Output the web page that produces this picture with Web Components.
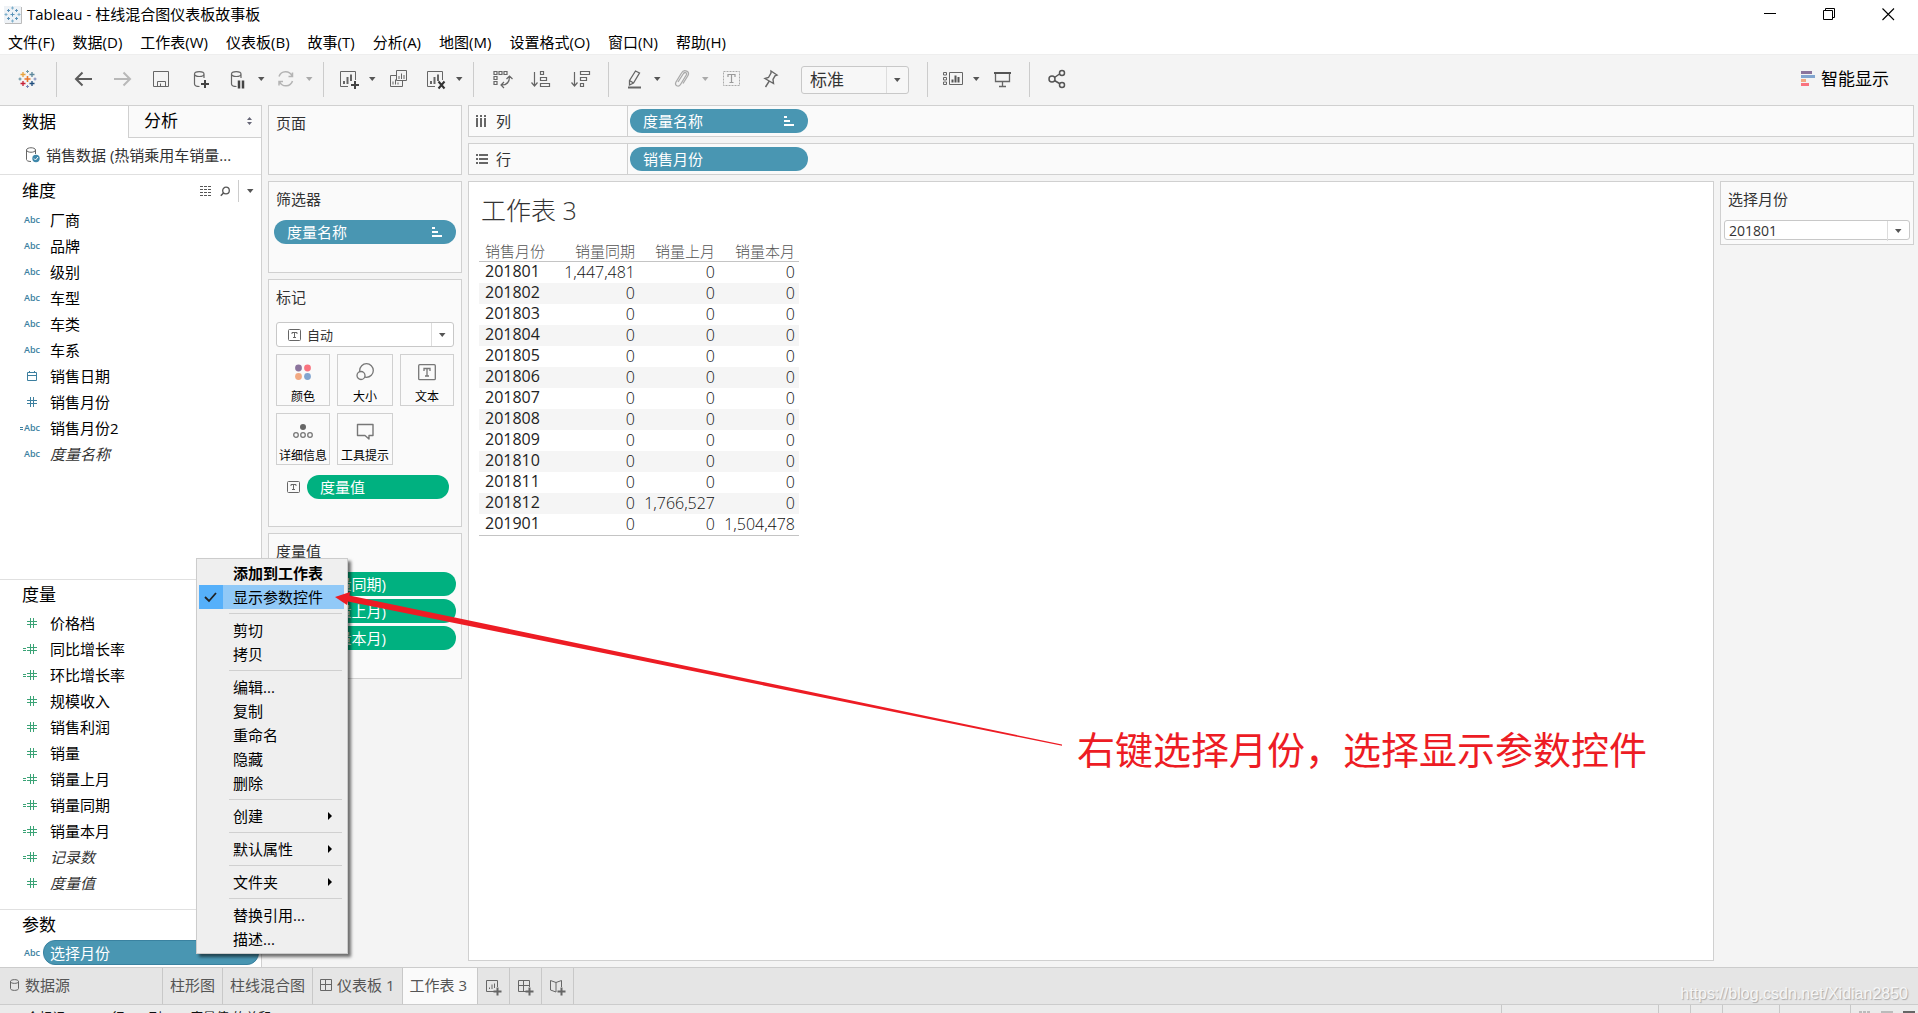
<!DOCTYPE html>
<html lang="zh-CN">
<head>
<meta charset="utf-8">
<title>Tableau - 柱线混合图仪表板故事板</title>
<style>
html,body{margin:0;height:100%}
body{font:15px/20px "Open Sans","Noto Sans CJK SC",sans-serif;color:#000;background:#f4f4f4;overflow:hidden}
</style>
</head>
<body>
<tb-app></tb-app>
<script>
const S = 'fill="none" stroke="#666"';
const caret = '<path d="M0 0h8l-4 4.5z" fill="#555"/>';
const caretLight = '<path d="M0 0h8l-4 4.5z" fill="#aaa"/>';
const plus = (x, y, c = '#444') => `<path d="M${x - 4} ${y}h8M${x} ${y - 4}v8" stroke="${c}" stroke-width="2" fill="none"/>`;
const cyl = `<path d="M16 11V7M6.500 7v10c0 1.500 2 2.500 5 2.500M6.500 7c0-3.300 9.500-3.300 9.500 0s-9.500 3.300-9.500 0" ${S} stroke-width="1.200"/>`;
const cross = (x, y, r, c, w = 1) => `<path d="M${x - r} ${y}h${2 * r}M${x} ${y - r}v${2 * r}" stroke="${c}" stroke-width="${w}"/>`;
const ICONS = {
  app: [19, 19, `<rect x="1" y="1" width="17" height="17" fill="#eef2f6"/><path d="M18.500 2v16.500H2" fill="none" stroke="#bbb"/>` +
    cross(9.5, 9.5, 2, '#5b93b8') + cross(5.5, 5.5, 1.500, '#5b93b8') + cross(13.5, 5.5, 1.500, '#5b93b8') + cross(5.5, 13.5, 1.500, '#5b93b8') + cross(13.5, 13.5, 1.500, '#5b93b8') +
    cross(9.5, 3, 1.500, '#7fb0cc') + cross(9.5, 16, 1.500, '#7fb0cc') + cross(3, 9.5, 1.500, '#7fb0cc') + cross(16, 9.5, 1.500, '#7fb0cc')],
  logo: [25, 24, cross(12.5, 12, 3, '#e8762c', 1.600) + cross(8, 7.5, 2.500, '#e8a33d', 1.300) + cross(17, 7.5, 2.500, '#5b879b', 1.300) + cross(8, 16.500, 2.500, '#c72037', 1.300) +
    cross(17, 16.500, 2.500, '#1f4d7d', 1.300) + cross(12.5, 4.5, 1.500, '#7199a6') + cross(12.5, 19.500, 1.500, '#7a86b8') + cross(5, 12, 1.500, '#59879b') + cross(20, 12, 1.500, '#7a86b8')],
  back: [25, 24, '<path d="M5 12h16M11.500 5.500L5 12l6.500 6.500" fill="none" stroke="#5c5c5c" stroke-width="2"/>'],
  fwd: [25, 24, '<path d="M4 12h16M13.500 5.500L20 12l-6.500 6.500" fill="none" stroke="#b8b8b8" stroke-width="2"/>'],
  save: [25, 24, `<path d="M4.500 4.500h15v15h-15zM8.500 19v-4.500h8V19M11.500 16.500v3" ${S}/>`],
  dbadd: [25, 24, cyl + plus(17, 17)],
  dbpause: [25, 24, cyl + '<path d="M14 13.500v8M18 13.500v8" stroke="#444" stroke-width="2.500"/>'],
  refresh: [25, 24, '<path d="M6 9.500a7 7 0 0 1 13-.5M19.500 14a7 7 0 0 1-13 .8M19.500 5.500V9.500H15.500M6 18.500v-4h4" fill="none" stroke="#b4b4b4" stroke-width="1.500"/>'],
  sheetadd: [25, 24, `<path d="M12 19.500H4.500v-15h15V13" ${S}/><path d="M8 17v-3M11.500 17V10M15 14V7.500" stroke="#666" stroke-width="2"/>` + plus(19, 18)],
  dup: [25, 24, `<path d="M10.500 3.500h10v10h-10zM10.500 8.500h-6v11h12v-6" ${S}/><path d="M13 12V9M15.500 12V6.500M18 12V8M7 17.500v-3M9.500 17.500v-5M12 17.500v-2" stroke="#666"/>`],
  clear: [25, 24, `<path d="M12 19.500H4.500v-15h15V13" ${S}/><path d="M8 17v-3M11.500 17V10M15 14V7.500" stroke="#666" stroke-width="2"/><path d="M15.500 14.500l6 7M21.500 14.500l-6 7" stroke="#333" stroke-width="2"/>`],
  swap: [25, 24, `<path d="M5 4.500h3v3h-3zM10 4.500h3v3h-3zM15 4.500h3v3h-3zM5 9.500h3v3h-3zM5 14.500h3v3h-3zM20.500 9.500c0 6-2.500 8.500-8 8.500M17.500 12l3-3 3 3M15 15l-3 3 3 3" ${S} stroke-width="1.200"/>`],
  asc: [25, 24, `<path d="M5.500 5v13M2.500 15.500l3 3.500 3-3.500M11.500 4.500h3v3h-3zM11.500 10.500h6v3h-6zM11.500 16.500h9v3h-9z" ${S} stroke-width="1.200"/>`],
  desc: [25, 24, `<path d="M5.500 5v13M2.500 15.500l3 3.500 3-3.500M11.500 4.500h9v3h-9zM11.500 10.500h6v3h-6zM11.500 16.500h3v3h-3z" ${S} stroke-width="1.200"/>`],
  pen: [25, 24, `<path d="M8.500 13.500L14.500 4l4 2-6 10-4 2zM8.500 13.500l4 2.500" ${S} stroke-width="1.300"/><path d="M7 20.500h13" stroke="#666" stroke-width="2"/>`],
  clip: [25, 24, '<path d="M9 15l5.500-8.500c1.500-2 4-.5 2.800 1.500L11.500 17.500c-2 3.200-6.500 1-4.500-2.500L12.500 6c2.500-4.500 9-1.500 6.500 2.500L14 16.500" fill="none" stroke="#aaa" stroke-width="1.300"/>'],
  label: [25, 24, '<rect x="4.500" y="4.500" width="16" height="14" fill="none" stroke="#aaa" stroke-dasharray="2 1"/><path d="M9 10V7.500h7V10M12.500 7.500v8M10.500 15.500h4" fill="none" stroke="#999" stroke-width="1.200"/>'],
  pin: [25, 24, `<path d="M13 4l6 4-2 .8-2 3.700.5 4-8.500-5 3.500-1 2.500-4.500zM11 14.500L7.500 20" ${S} stroke-width="1.400"/>`],
  showcards: [25, 24, `<path d="M9.500 5.500h13v12h-13zM3.500 5.500h3v2.500h-3zM3.500 10.500h3v2.500h-3zM3.500 15h3v2.500h-3z" ${S}/><path d="M12.500 15.500v-3M15.500 15.500V8.500M18.500 15.500V10" stroke="#555" stroke-width="2"/>`],
  present: [25, 24, `<path d="M4 6h17" stroke="#555" stroke-width="2"/><path d="M5.500 7v7.500h14V7M12.500 14.500v5M9 19.500h7" ${S} stroke-width="1.300"/>`],
  share: [25, 24, '<path d="M10.500 10.500l5-3.500M10.500 13.500l5 3" stroke="#555" stroke-width="1.500"/><g fill="none" stroke="#555" stroke-width="1.500"><circle cx="8" cy="12" r="3"/><circle cx="18" cy="6" r="2.500"/><circle cx="18" cy="18" r="2.500"/></g>'],
  caret: [8, 5, caret], caretLight: [8, 5, caretLight],
  caretS: [7, 4, '<path d="M0 0h6.500L3.250 4z" fill="#555"/>'], caretSL: [7, 4, '<path d="M0 0h6.500L3.250 4z" fill="#aaa"/>'],
  showme: [14, 16, '<path d="M0 0h11v3H0z" fill="#8b749c"/><path d="M0 4h14v3H0z" fill="#82a5cf"/><path d="M0 8h5v3H0z" fill="#f2a982"/><path d="M0 12h8v3H0z" fill="#f9737f"/>'],
  updown: [6, 8, '<path d="M0 3l2.500-3L5 3zM0 5l2.500 3L5 5z" fill="#667"/>'],
  min: [13, 13, '<path d="M0 5.500h12" stroke="#000"/>'],
  restore: [13, 13, '<path d="M.5 2.500h9v9h-9zM2.500 2.500v-2h9v9h-2" fill="none" stroke="#000"/>'],
  close: [13, 13, '<path d="M.5.5l11.500 11.500M12 .5L.5 12" stroke="#000" stroke-width="1.100"/>'],
  dbok: [14, 16, '<path d="M9.500 7V3M.500 3v9.500c0 1 1.500 2 4.500 2M.500 3C.5 0 9.500 0 9.500 3s-9 3-9 0" fill="none" stroke="#666"/><circle cx="10" cy="11.500" r="3.700" fill="#3f88ab"/><path d="M8 11.500l1.500 1.500 2.500-3" fill="none" stroke="#fff"/>'],
  db: [10, 12, '<path d="M.5 2.500v7c0 2.500 8 2.500 8 0v-7M.5 2.500c0-2.500 8-2.500 8 0s-8 2.500-8 0" fill="none" stroke="#666"/>'],
  list: [12, 10, '<path d="M0 .5h12M0 3.500h12M0 6.500h12M0 9.500h12" stroke="#555" stroke-dasharray="3 1"/>'],
  find: [10, 11, '<circle cx="6" cy="4.500" r="3.300" fill="none" stroke="#555" stroke-width="1.300"/><path d="M3.500 7L.8 9.800" stroke="#555" stroke-width="1.500"/>'],
  hash: [10, 10, '<path d="M3.500 0v10M6.500 0v10M0 3.500h10M0 6.500h10" stroke="currentColor"/>'],
  cal: [10, 10, '<path d="M.5 1.500h9v8h-9zM.5 4.500h9M2.500 0v2M7.500 0v2" fill="none" stroke="currentColor"/>'],
  eq: [3, 5, '<path d="M0 1.500h3M0 3.500h3" stroke="currentColor"/>'],
  cols: [10, 12, '<path d="M1 0v12M5 0v12M9 0v12" stroke="#666" stroke-width="2" stroke-dasharray="2 1 9"/>'],
  rows: [12, 10, '<path d="M0 1h12M0 5h12M0 9h12" stroke="#666" stroke-width="2" stroke-dasharray="2 1 9"/>'],
  sort: [10, 10, '<path d="M0 1h3M0 5h6M0 9h10" stroke="#fff" stroke-width="2"/>'],
  T: [13, 12, '<rect x=".5" y=".5" width="12" height="11" rx="1" fill="none" stroke="#666"/><path d="M4 5V3.500h5V5M6.500 3.500v5M5 8.500h3" fill="none" stroke="#666"/>'],
  Tbig: [18, 17, '<rect x=".7" y=".7" width="16.600" height="15" rx="1" fill="none" stroke="#777" stroke-width="1.300"/><path d="M6 7V4.500h6V7M9 4.500v7.500M7 12h4" fill="none" stroke="#777" stroke-width="1.300"/>'],
  color: [16, 17, '<circle cx="3.500" cy="4" r="3.400" fill="#8b749c"/><circle cx="12.500" cy="4" r="3.400" fill="#f9737f"/><circle cx="3.500" cy="12.500" r="3.400" fill="#f2a982"/><circle cx="12.500" cy="12.500" r="3.400" fill="#82a5cf"/>'],
  size: [18, 18, '<circle cx="10.500" cy="7.500" r="6.800" fill="none" stroke="#777" stroke-width="1.300"/><circle cx="5" cy="12.500" r="4" fill="#fafafa" stroke="#777" stroke-width="1.300"/>'],
  detail: [20, 16, '<circle cx="10" cy="4" r="3" fill="#666"/><g fill="none" stroke="#777" stroke-width="1.300"><circle cx="3" cy="12" r="2.300"/><circle cx="10" cy="12" r="2.300"/><circle cx="17" cy="12" r="2.300"/></g>'],
  tip: [18, 17, '<path d="M1.500 1.500h15.500v11h-4v3.500l-4-3.500H1.500z" fill="none" stroke="#777" stroke-width="1.400" stroke-linejoin="round"/>'],
  check: [14, 11, '<path d="M1 5l4 4 7-8" fill="none" stroke="#222" stroke-width="1.800"/>'],
  right: [5, 8, '<path d="M0 0l4 4-4 4z" fill="#000"/>'],
  dash: [12, 12, '<path d="M.5.5h11v11H.5zM5.500.5v11M.5 5.500h11" fill="none" stroke="#666"/>'],
  nsheet: [16, 16, '<path d="M8 11.500H.5V.5h11V7" fill="none" stroke="#666"/><path d="M3.500 9V7.500M6 9V4.500M8.500 8V3.500" stroke="#666"/>' + plus(11.500, 11.500, '#666')],
  ndash: [16, 16, '<path d="M8 11.500H.5V.5h11V7M5.500.5v11M.5 5.500h11" fill="none" stroke="#666"/>' + plus(11.500, 11.500, '#666')],
  nstory: [16, 16, '<path d="M.5.500L6 2.500 11.500.500V7M.5.500V10L6 12M6 2.500V12" fill="none" stroke="#666"/>' + plus(11.500, 11.500, '#666')],
  v1: [12, 12, '<path d="M0 1h12M0 5h12" stroke="#bbb" stroke-width="2" stroke-dasharray="3 1"/>'],
  v2: [12, 12, '<path d="M0 2h12" stroke="#bbb" stroke-width="4"/>'],
  v3: [12, 12, '<path d="M0 2h12" stroke="#666" stroke-width="4"/>']
};
const icon = n => `<tb-icon name="${n}"></tb-icon>`;

// Registers an element whose shadow root is filled from a style sheet and a render function.
function define(name, css, render) {
  customElements.define(name, class extends HTMLElement {
    constructor() {
      super();
      this.attachShadow({ mode: 'open' });
    }
    connectedCallback() {
      this.shadowRoot.innerHTML = `<style>*{box-sizing:border-box}button{font:inherit;color:inherit;border:0;background:none;padding:0;margin:0}${css}</style>${render(this)}`;
    }
  });
}

define('tb-icon', ':host{display:block;flex:none;line-height:0}svg{display:block}', e => {
  const [w, h, body] = ICONS[e.getAttribute('name')];
  return `<svg width="${w}" height="${h}" viewBox="0 0 ${w} ${h}" aria-hidden="true">${body}</svg>`;
});

define('tb-titlebar', `
:host{display:flex;height:28px;background:#fff;align-items:center;padding-left:3px}
.t{margin-left:5px;flex:1}
button{width:59px;height:28px;display:grid;place-items:center}`,
() => `${icon('app')}<span class="t">Tableau - 柱线混合图仪表板故事板</span>
<button aria-label="最小化">${icon('min')}</button><button aria-label="还原">${icon('restore')}</button><button aria-label="关闭">${icon('close')}</button>`);

define('tb-menubar', `
:host{display:flex;height:26px;background:#fff;gap:18px;padding:2px 8px 0;align-items:center;box-sizing:border-box}
button{white-space:nowrap}`,
() => ['文件(F)', '数据(D)', '工作表(W)', '仪表板(B)', '故事(T)', '分析(A)', '地图(M)', '设置格式(O)', '窗口(N)', '帮助(H)'].map(t => `<button>${t}</button>`).join(''));

define('tb-select', `
:host{display:grid;border:1px solid #c8c8c8;border-radius:3px;background:#fff;color:#333;height:var(--h,28px)}
select,.c{grid-area:1/1}
select{appearance:none;border:0;background:none;font:inherit;color:inherit;padding:0 30px 0 var(--pad,8px);margin:0;width:100%;height:100%;outline:0}
.c{justify-self:end;width:22px;border-left:1px solid #ddd;display:grid;place-items:center;pointer-events:none}
slot{display:contents}
::slotted(*){grid-area:1/1;align-self:center;margin-left:11px;pointer-events:none}`,
e => `<select aria-label="${e.getAttribute('label')}"><option>${e.getAttribute('value')}</option></select><span class="c">${icon('caretS')}</span><slot></slot>`);

define('tb-toolbar', `
:host{display:flex;height:51px;padding-bottom:2px;align-items:center;border-top:1px solid #eee;box-sizing:border-box}
button{width:39px;height:32px;display:grid;place-items:center;flex:none}
.s{width:35px}.k{width:13px}.logo{width:55px}.w{width:40px}
hr{width:1px;height:35px;border:0;background:#ccc;margin:0 7px}
hr:first-of-type{margin-left:1px}
tb-select{width:108px;margin:2px 11px 0;font-size:17px;background:#f7f7f7}
.me{width:auto;margin-left:auto;margin-right:29px;display:flex;align-items:center;gap:6px;font-size:17px}`,
() => {
  const b = (n, l, c = '') => `<button class="${c}" aria-label="${l}">${icon(n)}</button>`;
  const sp = (n, l, light) => b(n, l, 's') + b(light ? 'caretSL' : 'caretS', l + '选项', 'k');
  return b('logo', '开始页面', 'logo') + '<hr>' + b('back', '撤消') + b('fwd', '重做') + b('save', '保存') + b('dbadd', '新建数据源') +
    sp('dbpause', '暂停自动更新') + sp('refresh', '运行更新', 1) + '<hr>' + sp('sheetadd', '新建工作表') + b('dup', '复制') + sp('clear', '清除') + '<hr>' +
    b('swap', '交换行和列', 'w') + b('asc', '升序', 'w') + b('desc', '降序', 'w') + '<hr>' + sp('pen', '突出显示') + sp('clip', '分组', 1) + b('label', '标签') + b('pin', '固定') +
    '<tb-select label="适合" value="标准"></tb-select><hr>' + sp('showcards', '显示卡') + b('present', '演示') + '<hr>' + b('share', '共享') +
    `<button class="me">${icon('showme')}智能显示</button>`;
});

define('tb-field', `
:host{display:grid;grid-template-columns:40px 1fr;column-gap:10px;height:26px;align-items:center;color:#000}
:host([tone=dim]) .i{color:#3c7f9f}
:host([tone=mea]) .i{color:#3ba376}
:host([calc]) .x{display:block}
.x{display:none}
.i{display:flex;justify-content:end;align-items:center;gap:1px;font:600 9px/14px "Open Sans",sans-serif}
.g{margin-right:3px}
:host([auto]){font-style:italic;color:#333}
:host([auto]) .i{font-style:normal}`,
e => {
  const k = e.getAttribute('kind');
  return `<span class="i"><tb-icon class="x" name="eq"></tb-icon>${k === 'abc' ? 'Abc' : `<tb-icon class="g" name="${k}"></tb-icon>`}</span><slot></slot>`;
});

define('tb-pill', `
:host{display:flex;height:24px;border-radius:12px;background:#4996b2;color:#fff;align-items:center;justify-content:space-between;padding:0 14px 0 13px;white-space:nowrap}
:host([green]){background:#00b180}
button{line-height:24px}`,
e => `<button><slot></slot></button>${e.hasAttribute('sorted') ? icon('sort') : ''}`);

define('tb-datapane', `
:host{display:flex;flex-direction:column;background:#fff;border-right:1px solid #d0d0d0}
.tabs{display:grid;grid-template-columns:128px 1fr;height:33px;border-top:1px solid #d0d0d0;font-size:17px}
.tabs button{text-align:left;padding-left:22px}
.tabs .b{background:#fafafa;border-left:1px solid #d0d0d0;border-bottom:1px solid #d0d0d0;padding:0 8px 2px 15px;display:flex;justify-content:space-between;align-items:center}
.src{display:flex;height:37px;align-items:center;gap:6px;padding:0 0 2px 26px;border-bottom:1px solid #e0e0e0;color:#333}
section{min-height:0;overflow:hidden}
.d{flex:405 1 0}.m{flex:329 1 0;border-top:1px solid #e0e0e0}.p{flex:none;border-top:1px solid #e0e0e0;height:58px}
h2{margin:0;font-size:17px;font-weight:400;line-height:30px;height:30px;padding-left:22px;display:flex;align-items:center}
.d h2{height:32px}
.tools{margin-left:auto;display:flex;align-items:center;gap:8px;margin-right:7px}
.tools i{width:1px;height:22px;background:#ccc}
.par{display:grid;grid-template-columns:40px 1fr;column-gap:3px;align-items:center;padding-right:2px}
.par span{font:600 9px/14px "Open Sans",sans-serif;color:#3c7f9f;text-align:right}
tb-pill{height:25px;padding-left:6px;border:1px solid #3a82a0}`,
() => {
  const f = (tone, k, t, x = '') => `<tb-field role="listitem" tone="${tone}" kind="${k}" ${x}>${t}</tb-field>`;
  const dims = ['厂商', '品牌', '级别', '车型', '车类', '车系'].map(t => f('dim', 'abc', t)).join('') + f('dim', 'cal', '销售日期') + f('dim', 'hash', '销售月份') + f('dim', 'abc', '销售月份2', 'calc') + f('dim', 'abc', '度量名称', 'auto');
  const mea = [['价格档'], ['同比增长率', 'calc'], ['环比增长率', 'calc'], ['规模收入'], ['销售利润'], ['销量'], ['销量上月', 'calc'], ['销量同期', 'calc'], ['销量本月', 'calc'], ['记录数', 'calc auto'], ['度量值', 'auto']].map(([t, x]) => f('mea', 'hash', t, x)).join('');
  return `<div class="tabs"><button>数据</button><button class="b">分析${icon('updown')}</button></div>
<div class="src">${icon('dbok')}<span>销售数据 (热销乘用车销量...</span></div>
<section class="d"><h2>维度<span class="tools">${icon('list')}${icon('find')}<i></i>${icon('caretS')}</span></h2><div role="list">${dims}</div></section>
<section class="m"><h2>度量</h2><div role="list">${mea}</div></section>
<section class="p"><h2>参数</h2><div class="par"><span>Abc</span><tb-pill>选择月份</tb-pill></div></section>`;
});

define('tb-card', `
:host{display:block;border:1px solid #d0d0d0;background:#fafafa;padding:7px 5px 0;color:#333}
h3{margin:0 2px 11px;font-size:15px;line-height:20px;font-weight:400}`,
e => `<h3>${e.getAttribute('heading')}</h3><slot></slot>`);

define('tb-marks', `
:host{display:block;padding:4px 2px 0}
tb-select{--h:25px;--pad:30px;font-size:13px}
.g{display:grid;grid-template-columns:54fr 56fr 54fr;gap:7px;margin:7px 0 10px}
.g button{height:52px;border:1px solid #d0d0d0;font-size:12px;line-height:16px;color:#000;display:grid;grid-template-rows:34px 16px;justify-items:center;align-items:center;white-space:nowrap}
.v{display:grid;grid-template-columns:13px 1fr;gap:7px;align-items:center;padding:0 5px 0 11px}`,
() => `<tb-select label="标记类型" value="自动">${icon('T')}</tb-select>
<div class="g">${[['color', '颜色'], ['size', '大小'], ['Tbig', '文本'], ['detail', '详细信息'], ['tip', '工具提示']].map(([n, t]) => `<button>${icon(n)}<span>${t}</span></button>`).join('')}</div>
<div class="v">${icon('T')}<tb-pill green>度量值</tb-pill></div>`);

define('tb-cards', `
:host{display:flex;flex-direction:column;gap:6px}
.a{min-height:70px}.b{min-height:92px}.c{min-height:248px}.d{min-height:146px}
.d tb-pill{margin-bottom:3px}`,
() => `<tb-card class="a" heading="页面"></tb-card>
<tb-card class="b" heading="筛选器"><tb-pill sorted>度量名称</tb-pill></tb-card>
<tb-card class="c" heading="标记"><tb-marks></tb-marks></tb-card>
<tb-card class="d" heading="度量值"><tb-pill green>总和(销量同期)</tb-pill><tb-pill green>总和(销量上月)</tb-pill><tb-pill green>总和(销量本月)</tb-pill></tb-card>`);

define('tb-shelf', `
:host{display:grid;grid-template-columns:158px 1fr;height:32px;border:1px solid #d0d0d0;background:#fafafa;color:#333}
.l{display:flex;align-items:center;padding-left:7px;gap:8px}
.l tb-icon{width:12px}
.z{border-left:1px solid #d0d0d0;padding:3px 0 0 2px}
::slotted(tb-pill){width:178px;box-sizing:border-box}`,
e => `<span class="l">${icon(e.getAttribute('icon'))}${e.getAttribute('label')}</span><div class="z"><slot></slot></div>`);

define('tb-sheet', `
:host{display:block;background:#fff;border:1px solid #d0d0d0;padding:11px 10px;color:#333}
h1{margin:0 2px 14px;font-size:25px;line-height:34px;font-weight:300}
table{border-collapse:collapse;table-layout:fixed;width:320px;border-bottom:1px solid #c4c4c4}
th,td{padding:0 4px 0 0;height:21px;line-height:21px;text-align:right;font-weight:300;font-size:16px;white-space:nowrap}
td{color:#111}
thead th{font-size:15px;line-height:20px;height:20px;border-bottom:1px solid #c4c4c4;color:#555}
th:first-child{text-align:left;padding-left:6px;padding-right:0}
tbody th{font-weight:400;line-height:19px;padding-bottom:2px;color:#222}
tbody tr:nth-child(even){background:#f5f5f5}`,
() => {
  const v = { 201801: ['1,447,481', 0, 0], 201812: [0, '1,766,527', 0], 201901: [0, 0, '1,504,478'] };
  const months = [...Array(12)].map((_, i) => 201801 + i).concat(201901);
  return `<h1>工作表 3</h1><table><thead><tr>${['销售月份', '销量同期', '销量上月', '销量本月'].map(t => `<th scope="col">${t}</th>`).join('')}</tr></thead><tbody>${months.map(m => `<tr><th scope="row">${m}</th>${(v[m] || [0, 0, 0]).map(n => `<td>${n}</td>`).join('')}</tr>`).join('')}</tbody></table>`;
});

define('tb-parameter', `
:host{display:block;border:1px solid #d0d0d0;background:#fafafa;padding:7px 3px 4px;color:#333;align-self:start}
span{display:block;margin:0 4px 11px}
tb-select{--h:20px;--pad:4px;font-size:14px}`,
() => '<span>选择月份</span><tb-select label="选择月份" value="201801"></tb-select>');

define('tb-workspace', `
:host{display:grid;grid-template-rows:32px 32px 1fr;gap:6px;min-width:0}
.v{display:grid;grid-template-columns:1fr 194px;gap:6px;min-height:0}`,
() => `<tb-shelf icon="cols" label="列"><tb-pill sorted>度量名称</tb-pill></tb-shelf>
<tb-shelf icon="rows" label="行"><tb-pill>销售月份</tb-pill></tb-shelf>
<div class="v"><tb-sheet></tb-sheet><tb-parameter></tb-parameter></div>`);

define('tb-tabs', `
:host{display:flex;height:38px;background:#e5e5e5;border-top:1px solid #ccc;border-bottom:1px solid #ccc;color:#555;box-sizing:border-box}
button{border-right:1px solid #c8c8c8;padding:0 7px 2px;display:flex;align-items:center;gap:5px;white-space:nowrap}
.src{width:163px;padding-left:10px}
.on{background:#fafafa;padding-right:10px}
.n{width:32px;padding:3px 0 0 1px;justify-content:center}`,
() => `<button class="src">${icon('db')}数据源</button><button>柱形图</button><button>柱线混合图</button><button>${icon('dash')}仪表板 1</button><button class="on">工作表 3</button>
<button class="n" aria-label="新建工作表">${icon('nsheet')}</button><button class="n" aria-label="新建仪表板">${icon('ndash')}</button><button class="n" aria-label="新建故事">${icon('nstory')}</button>`);

define('tb-status', `
:host{display:flex;height:28px;margin-bottom:-20px;background:#ebebeb;font-size:13px;padding-left:8px;color:#111}
span{padding-top:2px;margin-right:28px}
b{width:32px;border-left:1px solid #c8c8c8}
.f{margin-left:auto;width:157px}.h{width:57px}.j{width:71px}
.k{display:flex;gap:10px;width:68px;padding:6px 4px 0 8px}`,
() => `<span>39 个标记</span><span>13 行 x 3 列</span><span>度量值 的总和</span><b class="f"></b><b></b><b></b><b class="h"></b><b class="j"></b><b class="k">${icon('v1')}${icon('v2')}${icon('v3')}</b>`);

define('tb-contextmenu', `
:host{display:block;border:1px solid #ccc;background:#efefef;padding:2px;box-shadow:3px 3px 3px rgba(0,0,0,.55);width:152px;box-sizing:border-box;color:#000}
button{display:grid;grid-template-columns:24px 1fr 16px;width:145px;height:24px;align-items:center;text-align:left;line-height:24px;white-space:nowrap}
button.bold{font-weight:700}
.txt{padding-left:10px}
.on{background:#91c9f7}
.chk{height:24px;display:grid;place-items:center}
.on .chk{background:#56b0fa}
hr{border:0;height:1px;background:#d0d0d0;margin:4px 3px 4px 30px}`,
() => [['添加到工作表', 'bold'], ['显示参数控件', 'on'], 0, ['剪切'], ['拷贝'], 0, ['编辑...'], ['复制'], ['重命名'], ['隐藏'], ['删除'], 0, ['创建', '', 1], 0, ['默认属性', '', 1], 0, ['文件夹', '', 1], 0, ['替换引用...'], ['描述...']]
  .map(i => i ? `<button role="menuitem" class="${i[1] || ''}"><span class="chk">${i[1] === 'on' ? icon('check') : ''}</span><span class="txt">${i[0]}</span>${i[2] ? icon('right') : ''}</button>` : '<hr>').join(''));

define('tb-callout', `
:host{display:block;pointer-events:none}
svg{position:absolute;left:335px;top:588px}
p{position:absolute;left:1077px;top:726px;margin:0;font-size:38px;line-height:46px;color:#ed1c24;white-space:nowrap}`,
() => `<svg width="730" height="160" viewBox="0 0 730 160" aria-hidden="true"><path d="M0 9L15 4l-.5 3.500L727 156.500v1.300L13 13.500 12 17z" fill="#ed1c24"/></svg><p>右键选择月份，选择显示参数控件</p>`);

define('tb-app', `
:host{display:flex;flex-direction:column;height:100vh;overflow:hidden;position:relative}
tb-titlebar,tb-menubar,tb-toolbar,tb-tabs,tb-status{flex:none}
main{flex:1;min-height:0;display:grid;grid-template-columns:262px 194px 1fr;column-gap:6px;padding-right:4px}
tb-workspace,tb-cards{margin-bottom:6px}
tb-contextmenu{position:absolute;left:196px;top:558px}
.wm{position:absolute;right:10px;bottom:9px;font:16px/20px "Liberation Sans",sans-serif;color:#f6f6f6;text-shadow:1px 1px 1px #aaa}`,
() => `<tb-titlebar></tb-titlebar><tb-menubar></tb-menubar><tb-toolbar></tb-toolbar>
<main><tb-datapane></tb-datapane><tb-cards></tb-cards><tb-workspace></tb-workspace></main>
<tb-tabs></tb-tabs><tb-status></tb-status>
<tb-contextmenu role="menu"></tb-contextmenu><tb-callout></tb-callout><span class="wm">https://blog.csdn.net/Xidian2850</span>`);
</script>
</body>
</html>
